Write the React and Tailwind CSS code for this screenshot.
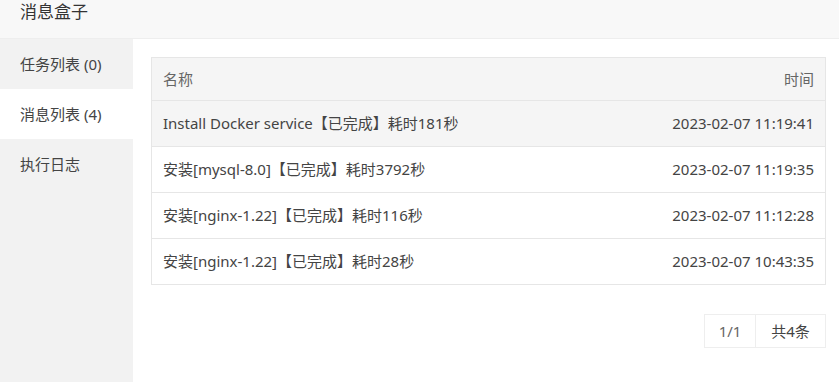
const rows = [
  { name: "Install Docker service【已完成】耗时181秒", time: "2023-02-07 11:19:41" },
  { name: "安装[mysql-8.0]【已完成】耗时3792秒", time: "2023-02-07 11:19:35" },
  { name: "安装[nginx-1.22]【已完成】耗时116秒", time: "2023-02-07 11:12:28" },
  { name: "安装[nginx-1.22]【已完成】耗时28秒", time: "2023-02-07 10:43:35" },
];

const tabs = ["任务列表 (0)", "消息列表 (4)", "执行日志"];

const App = () => {
  return (
    <div
      className="w-[839px] h-[382px] bg-white text-[#444] flex flex-col overflow-hidden"
      style={{ fontFamily: '"Noto Sans", "Noto Sans CJK SC", sans-serif' }}
    >
      {/* HEADER */}
      <div className="h-[39px] shrink-0 bg-[#f8f8f8] border-b border-[#eeeeee] px-5 pt-[1px] text-[17px] leading-[22px] text-[#333]">
        消息盒子
      </div>

      <div className="flex flex-1">
        {/* SIDEBAR */}
        <div className="w-[133px] bg-[#f2f2f2]">
          {tabs.map((t, i) => (
            <div
              key={t}
              className={`h-[50px] px-5 flex items-center text-[15px] ${i === 1 ? "bg-white" : ""}`}
            >
              {t}
            </div>
          ))}
        </div>

        {/* CONTENT */}
        <div className="flex-1 pt-[18px] pl-[18px] pr-[13px]">
          <table className="w-full border border-[#e6e6e6] border-collapse text-[15px]">
            <thead>
              <tr className="bg-[#f5f5f5] h-[43px] text-[#666]">
                <th className="font-normal text-left px-[11px]">名称</th>
                <th className="font-normal text-right px-[11px]">时间</th>
              </tr>
            </thead>
            <tbody>
              {rows.map((r, i) => (
                <tr
                  key={i}
                  className={`h-[46px] border-t border-[#e6e6e6] ${i === 0 ? "bg-[#f5f5f5]" : ""}`}
                >
                  <td className="px-[11px]">{r.name}</td>
                  <td className="px-[11px] text-right">{r.time}</td>
                </tr>
              ))}
            </tbody>
          </table>

          {/* PAGINATION */}
          <div className="flex justify-end mt-[29px]">
            <div className="flex border border-[#eeeeee] h-[34px] text-[15px]">
              <span className="w-[51px] flex items-center justify-center text-[#666] border-r border-[#eeeeee]">1/1</span>
              <span className="w-[69px] flex items-center justify-center">共4条</span>
            </div>
          </div>
        </div>
      </div>
    </div>
  );
};

export default App;
